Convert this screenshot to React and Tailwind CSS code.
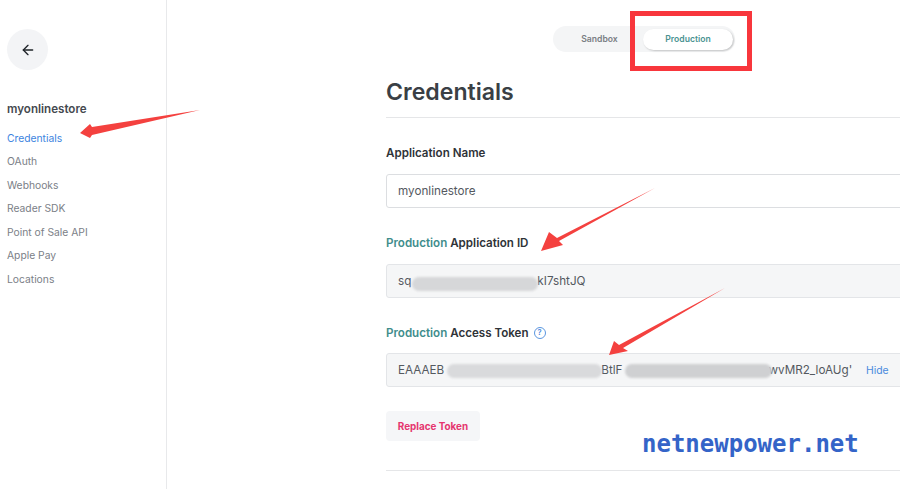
import React from 'react';
import { ArrowLeft } from 'lucide-react';

const navItems = ['OAuth', 'Webhooks', 'Reader SDK', 'Point of Sale API', 'Apple Pay', 'Locations'];

const Sidebar = () => (
   <aside className="w-[167px] shrink-0 border-r border-[#e8e9eb] pl-[7px] pt-[29px]">
      <button type="button" className="flex h-[41px] w-[41px] items-center justify-center rounded-full bg-[#f3f4f6] text-[#1f2429]">
         <ArrowLeft size={16} strokeWidth={2} />
      </button>
      <div className="mt-[30px] text-[11.6px] font-semibold leading-[18px] text-[#45494f]">myonlinestore</div>
      <nav className="mt-[10.5px] flex flex-col gap-[5.6px] text-[10.3px] leading-[18px] text-[#7b8087]">
         <a className="text-[#3d84e0]">Credentials</a>
         {navItems.map((item) => (
            <a key={item}>{item}</a>
         ))}
      </nav>
   </aside>
);

const Field = ({ children }) => (
   <div className="flex h-[34px] items-center rounded-[3px] border border-[#e3e5e8] bg-[#f5f6f7] pl-[11px] pt-[2px] text-[11.7px] text-[#54595f]">
      {children}
   </div>
);

const Content = () => (
   <main className="ml-[219px] w-[600px] shrink-0 pt-[26px]">
      {/* Sandbox / Production toggle */}
      <div className="ml-[167px] flex h-[26px] w-[182px] items-center rounded-full bg-[#f4f5f6] pr-[2px] text-[8.6px] font-semibold">
         <span className="w-[90px] pl-[3px] text-center text-[#7a7e83]">Sandbox</span>
         <span className="flex h-[21px] flex-1 items-center justify-center rounded-full bg-white text-[#4a9392] shadow-[1px_1px_2px_rgba(0,0,0,0.2)]">Production</span>
      </div>

      <h1 className="mt-[25px] text-[23.1px] font-semibold leading-[30px] text-[#3a3f45]">Credentials</h1>
      <div className="mt-[10px] border-t border-[#e5e6e8]" />

      <label className="mt-[27px] block text-[11.6px] font-semibold leading-[16px] text-[#2f3338]">Application Name</label>
      <div className="mt-[13px] flex h-[34px] items-center rounded-[3px] border border-[#dcdee1] bg-white pl-[11px] pt-[2px] text-[11.7px] text-[#54595f]">
         myonlinestore
      </div>

      <label className="mt-[27px] block text-[11.6px] font-semibold leading-[16px] text-[#2f3338]">
         <span className="text-[#3f8d8c]">Production</span> Application ID
      </label>
      <div className="mt-[13px]">
         <Field>
            <span>sq</span>
            <span className="ml-[126px]">kI7shtJQ</span>
         </Field>
      </div>

      <label className="mt-[27px] flex items-center text-[11.6px] font-semibold leading-[16px] text-[#2f3338]">
         <span className="whitespace-pre"><span className="text-[#3f8d8c]">Production</span> Access Token</span>
         <span className="ml-[5px] flex h-[12px] w-[12px] items-center justify-center rounded-full border border-[#5b97e0] text-[7.5px] font-semibold text-[#4a8ade]">?</span>
      </label>
      <div className="mt-[12px]">
         <Field>
            <span className="w-[468px] whitespace-nowrap">EAAAEB<span className="ml-[157px]">BtlF</span><span className="ml-[146px]">wvMR2_loAUg'</span></span>
            <span className="text-[10.4px] text-[#4a8ade]">Hide</span>
         </Field>
      </div>

      <button type="button" className="mt-[24px] h-[30px] w-[94px] rounded-[4px] bg-[#f5f6f8] text-[9.9px] font-bold text-[#e5356f]">
         Replace Token
      </button>
      <div className="mt-[29px] border-t border-[#e5e6e8]" />
   </main>
);

// Screenshot annotations drawn over the page
const Annotations = () => (
   <>
      <svg className="pointer-events-none absolute inset-0" width="900" height="489" viewBox="0 0 900 489">
         <polygon points="200,110 92,127 90,124 80,133 90,138 92,135" fill="#f4413f" />
         <polygon points="655,188 557,238 549,232 541,251 563,245 559,241" fill="#f4413f" />
         <polygon points="725,288 619,345 614,341 609,355 628,351 623,348" fill="#f4413f" />
      </svg>
      <div className="absolute left-[630px] top-[11px] h-[60px] w-[122px] border-[5px] border-[#f8363c]" />
      <div className="absolute left-[412px] top-[277px] h-[14px] w-[126px] rounded-full bg-[#d6d7d9] blur-[1px]" />
      <div className="absolute left-[447px] top-[364px] h-[14px] w-[155px] rounded-full bg-[#d9dadc] blur-[1px]" />
      <div className="absolute left-[625px] top-[364px] h-[14px] w-[147px] rounded-full bg-[#cfd0d2] blur-[1px]" />
      <div className="absolute left-[642px] top-[430px] font-['DejaVu_Sans_Mono',monospace] text-[24px] font-bold leading-[28px] text-[#3464c8]">
         netnewpower.net
      </div>
   </>
);

export default function App() {
   return (
      <div className="relative flex h-[489px] w-[900px] overflow-hidden bg-white font-['Inter',sans-serif]">
         <Sidebar />
         <Content />
         <Annotations />
      </div>
   );
}
